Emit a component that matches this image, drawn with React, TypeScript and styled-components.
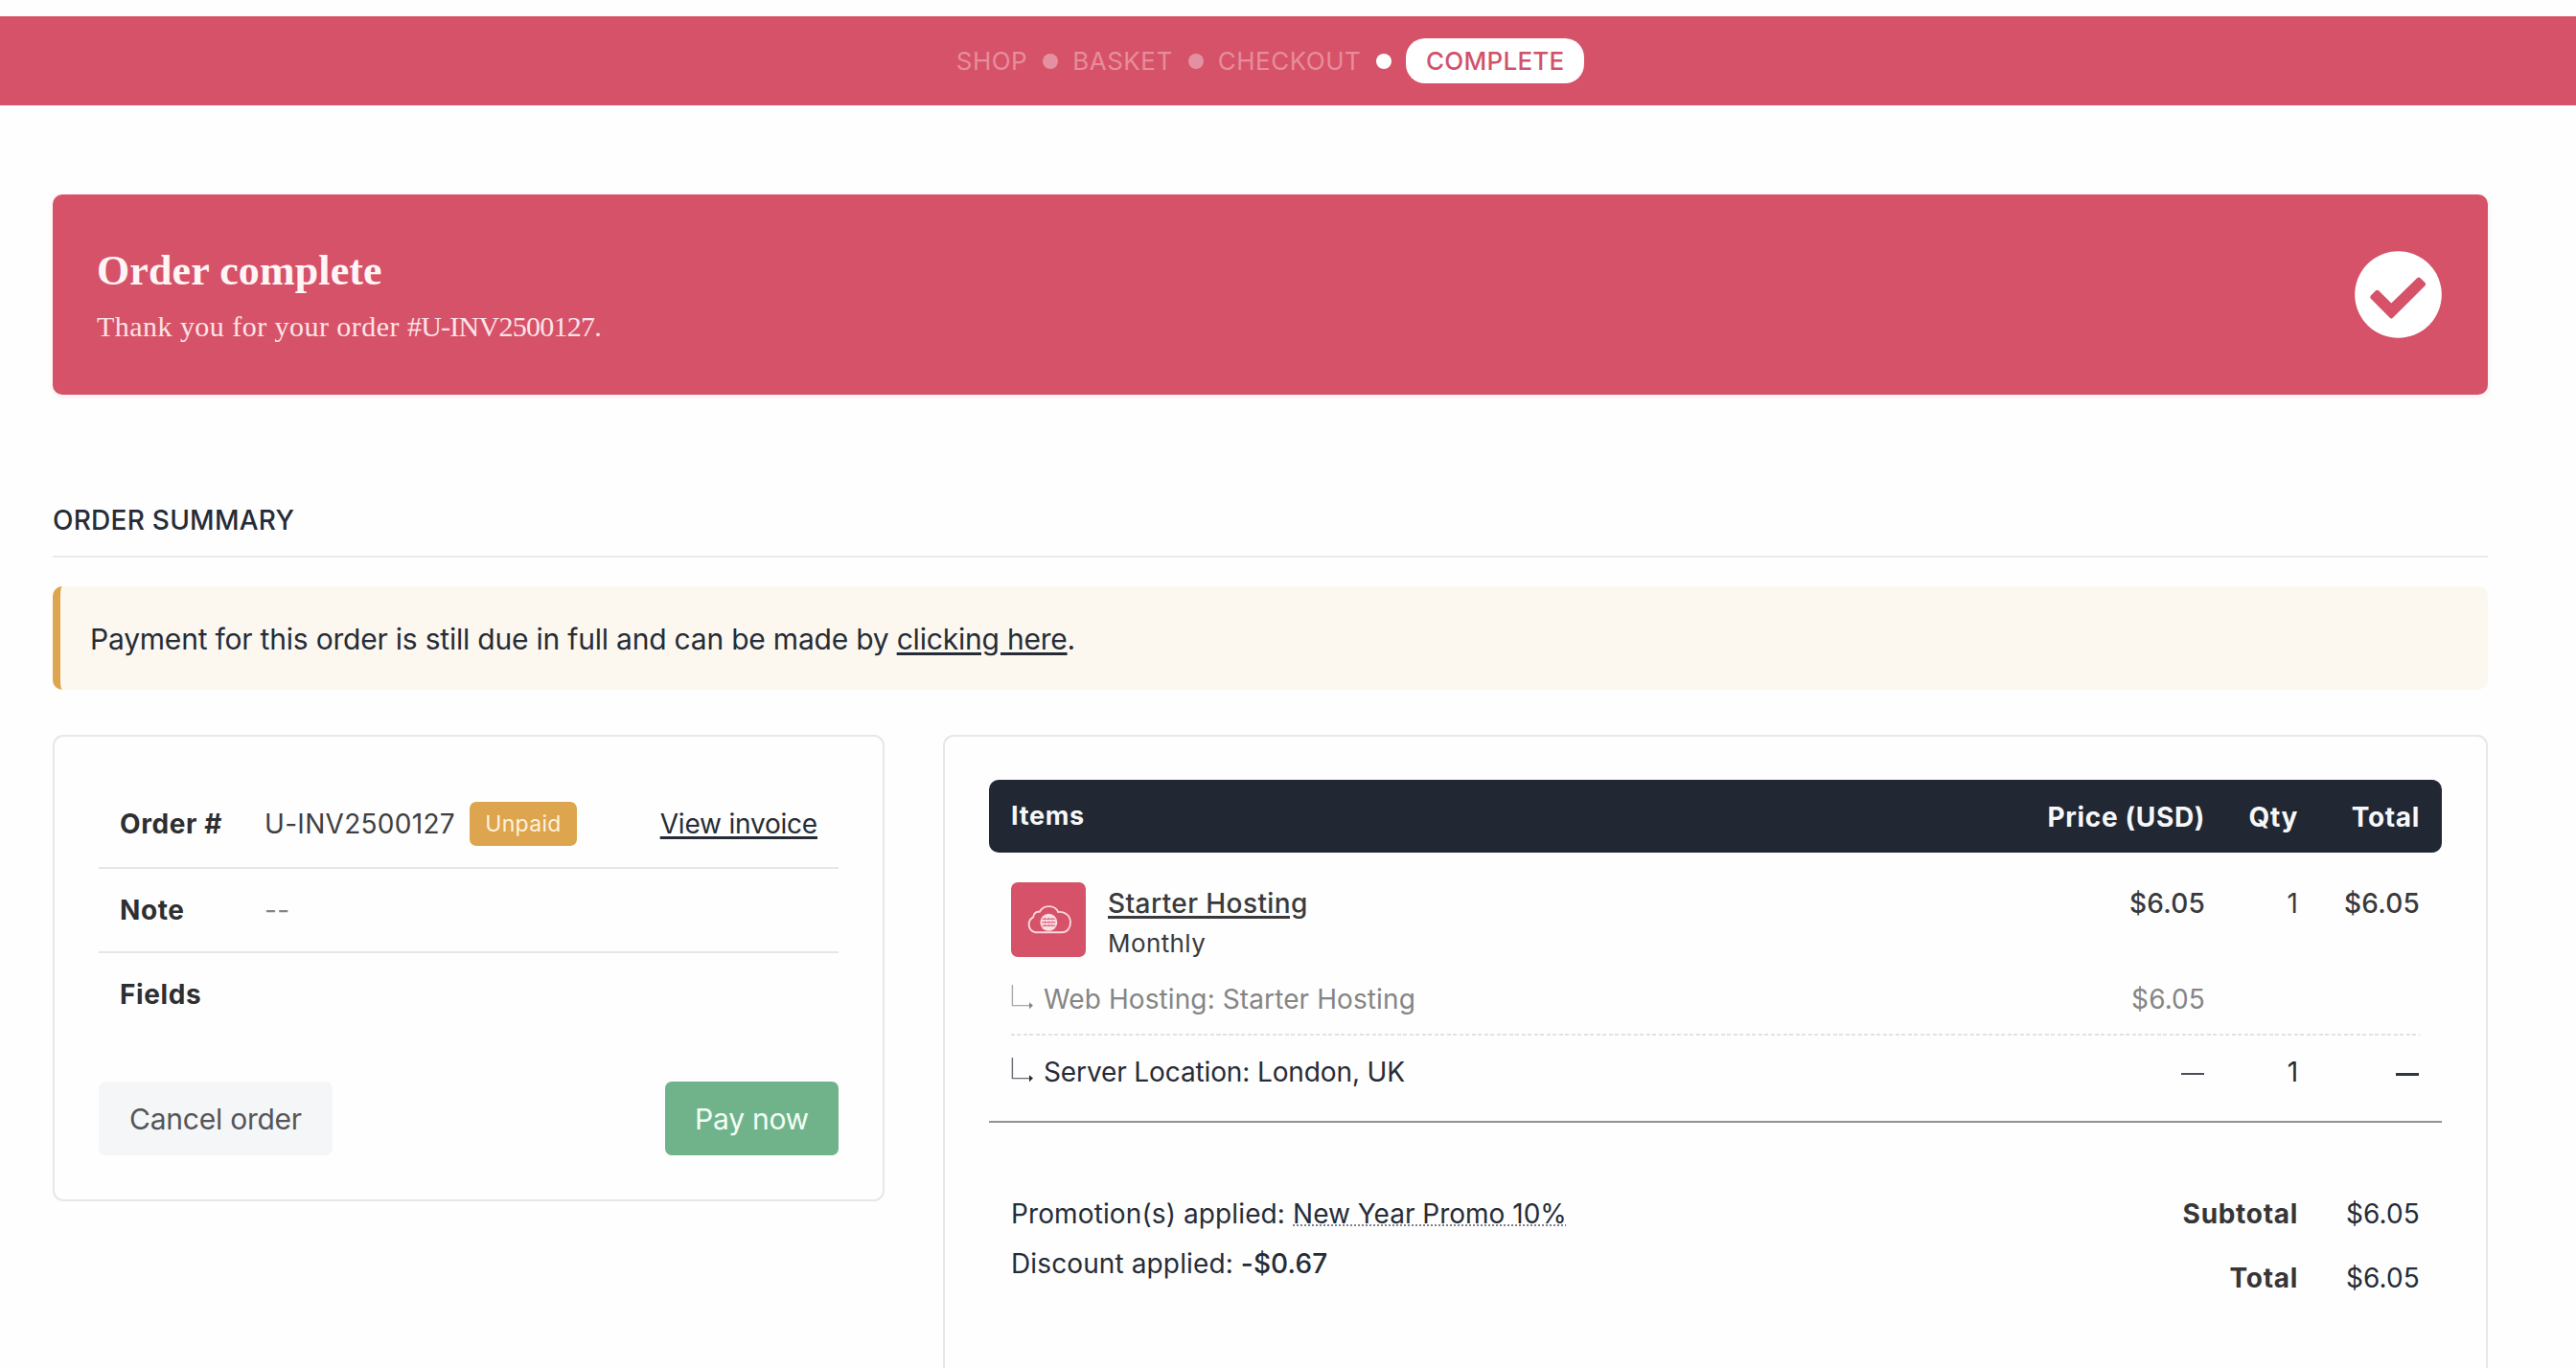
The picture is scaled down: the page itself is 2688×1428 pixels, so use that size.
import styled, { createGlobalStyle, css } from "styled-components";

const steps = ["SHOP", "BASKET", "CHECKOUT"];

function CheckIcon() {
  return (
    <svg width="91" height="91" viewBox="0 0 91 91">
      <circle cx="45.5" cy="45.5" r="45.3" fill="#ffffff" />
      <path
        d="M16.9 46.4l5-4.8a2.5 2.5 0 0 1 3.4 0L38.3 54.6 65.2 28.2a2.5 2.5 0 0 1 3.4 0l4.9 4.8a2.5 2.5 0 0 1 0 3.3L40.1 69.5a2.5 2.5 0 0 1-3.6 0L16.9 49.8a2.5 2.5 0 0 1 0-3.4z"
        fill="#d65268"
      />
    </svg>
  );
}

function HostingIcon() {
  return (
    <svg width="78" height="78" viewBox="0 0 78 78" fill="none">
      <path
        d="M25 52.2A8.6 8.6 0 0 1 23.2 36.3C23.3 32.5 26.4 30.2 29.8 30.8C33.8 23.2 45.6 23.2 49.2 31C56.8 30 62 35.4 62 42C62 48 58.2 52.2 53 52.2Z"
        stroke="#fbd7dd"
        strokeWidth="1.9"
      />
      <circle cx="39.3" cy="41.8" r="9" fill="#fbdde2" />
      <g stroke="#d65268" strokeWidth="1">
        <path d="M32.5 38.3h13.6M32 41.8h14.6M32.5 45.3h13.6" strokeDasharray="3 0.8" />
        <path d="M39.3 37v9.6M35.6 37v9.6M43 37v9.6" strokeDasharray="2 1.5" />
      </g>
    </svg>
  );
}

function BranchArrow() {
  return (
    <svg width="24" height="27" viewBox="0 0 24 27">
      <path d="M1.4 0V21.6H20" fill="none" stroke="currentColor" strokeWidth="1.4" opacity="0.7" />
      <path d="M19 18.2L23 21.6L19 25.2Z" fill="currentColor" />
    </svg>
  );
}

export default function App() {
  return (
    <Page>
      <GlobalStyle />
      <StepBar>
        {steps.map((step, i) => (
          <StepGroup key={step}>
            <Step>{step}</Step>
            <Dot $active={i === steps.length - 1} />
          </StepGroup>
        ))}
        <CurrentStep>COMPLETE</CurrentStep>
      </StepBar>

      <Main>
        <Banner>
          <div>
            <BannerTitle>Order complete</BannerTitle>
            <BannerText>
              Thank you for your order <OrderNumber>#U-INV2500127.</OrderNumber>
            </BannerText>
          </div>
          <CheckIcon />
        </Banner>

        <SectionTitle>ORDER SUMMARY</SectionTitle>

        <Alert>
          <span>
            Payment for this order is still due in full and can be made by{" "}
            <TextLink href="#">clicking here</TextLink>.
          </span>
        </Alert>

        <Columns>
          {/* Left Side - Order details */}
          <OrderCard>
            <DetailRow $tall>
              <DetailLabel>Order #</DetailLabel>
              <DetailValue>U-INV2500127</DetailValue>
              <Badge>Unpaid</Badge>
              <InvoiceLink href="#">View invoice</InvoiceLink>
            </DetailRow>
            <DetailRow>
              <DetailLabel>Note</DetailLabel>
              <DetailValue $muted>--</DetailValue>
            </DetailRow>
            <DetailRow>
              <DetailLabel>Fields</DetailLabel>
            </DetailRow>
            <Actions>
              <CancelButton type="button">Cancel order</CancelButton>
              <PayButton type="button">Pay now</PayButton>
            </Actions>
          </OrderCard>

          {/* Right Side - Items */}
          <ItemsCard>
            <TableHead>
              <ItemsHeading>Items</ItemsHeading>
              <span>Price (USD)</span>
              <span>Qty</span>
              <span>Total</span>
            </TableHead>

            <ItemRow>
              <Product>
                <ProductIcon>
                  <HostingIcon />
                </ProductIcon>
                <div>
                  <ProductName href="#">Starter Hosting</ProductName>
                  <ProductTerm>Monthly</ProductTerm>
                </div>
              </Product>
              <Amount>$6.05</Amount>
              <span>1</span>
              <Amount>$6.05</Amount>
            </ItemRow>

            <OptionRow $muted>
              <Option>
                <BranchArrow />
                Web Hosting: Starter Hosting
              </Option>
              <span>$6.05</span>
            </OptionRow>
            <Divider />
            <OptionRow>
              <Option>
                <BranchArrow />
                Server Location: London, UK
              </Option>
              <Dash />
              <span>1</span>
              <Dash $strong />
            </OptionRow>

            <Summary>
              <Promotions>
                <p>
                  Promotion(s) applied: <Promo>New Year Promo 10%</Promo>
                </p>
                <p>
                  Discount applied: <Discount>-$0.67</Discount>
                </p>
              </Promotions>
              <Totals>
                <TotalLabel>Subtotal</TotalLabel>
                <span>$6.05</span>
                <TotalLabel>Total</TotalLabel>
                <span>$6.05</span>
              </Totals>
            </Summary>
          </ItemsCard>
        </Columns>
      </Main>
    </Page>
  );
}

const GlobalStyle = createGlobalStyle`
  * {
    box-sizing: border-box;
    margin: 0;
  }
  body {
    margin: 0;
    background-color: #fefefe;
    color: #262c37;
    font-family: Inter, "Liberation Sans", sans-serif;
    font-size: 28px;
    letter-spacing: 0.12px;
  }
`;

const Page = styled.div`
  width: 2688px;
  height: 1428px;
  overflow: hidden;
  padding-top: 17px;
`;

const StepBar = styled.nav`
  display: flex;
  align-items: center;
  justify-content: center;
  gap: 15px;
  height: 93px;
  padding-right: 37px;
  background-color: #d65268;
  font-size: 26px;
`;

const StepGroup = styled.div`
  display: flex;
  align-items: center;
  gap: 16px;
`;

const Step = styled.span`
  color: #e68d9c;
  letter-spacing: 0.5px;
  line-height: 49px;
`;

const Dot = styled.span<{ $active?: boolean }>`
  width: 16px;
  height: 16px;
  border-radius: 50%;
  background-color: ${(p) => (p.$active ? "#ffffff" : "#e391a1")};
`;

const CurrentStep = styled.span`
  width: 186px;
  height: 47px;
  border-radius: 20px;
  background-color: #ffffff;
  color: #d0536a;
  font-weight: 500;
  letter-spacing: 0.25px;
  line-height: 48px;
  text-align: center;
`;

const Main = styled.main`
  width: 2541px;
  margin-left: 55px;
`;

const Banner = styled.section`
  display: flex;
  justify-content: space-between;
  height: 209px;
  margin-top: 93px;
  padding: 55px 48px 0 46px;
  border-radius: 10px;
  background-color: #d65268;
  box-shadow: 0 2px 6px rgba(214, 82, 104, 0.12);
  color: #fff4f6;
  font-family: "Liberation Serif", serif;

  svg {
    margin-top: 4px;
  }
`;

const BannerTitle = styled.h1`
  font-size: 44px;
  font-weight: 700;
  line-height: 50px;
`;

const BannerText = styled.p`
  margin-top: 13px;
  color: #fce3e7;
  font-size: 30px;
  letter-spacing: 0.46px;
  line-height: 40px;
`;

const OrderNumber = styled.span`
  letter-spacing: -0.75px;
`;

const SectionTitle = styled.h2`
  height: 60px;
  margin-top: 110px;
  border-bottom: 2px solid #e9eaeb;
  font-size: 28px;
  font-weight: 500;
  letter-spacing: 0.25px;
  line-height: 43px;
`;

const Alert = styled.div`
  display: flex;
  align-items: center;
  height: 108px;
  margin-top: 30px;
  padding: 1px 0 0 31px;
  border-left: 8px solid #dda54d;
  border-radius: 10px;
  background-color: #fcf8f0;
  font-size: 30px;
  letter-spacing: -0.21px;
`;

const linkStyle = css`
  color: inherit;
  text-decoration: underline;
  text-decoration-thickness: 2.5px;
  text-underline-offset: 3px;
`;

const TextLink = styled.a`
  ${linkStyle}
`;

const Columns = styled.div`
  display: grid;
  grid-template-columns: 868px 1fr;
  align-items: start;
  gap: 61px;
  margin-top: 47px;
`;

const Card = styled.section`
  border: 2px solid #e7e7e8;
  border-radius: 11px;
  background-color: #fefefe;
`;

const OrderCard = styled(Card)`
  height: 487px;
  padding: 45px 46px;
`;

const DetailRow = styled.div<{ $tall?: boolean }>`
  display: flex;
  align-items: center;
  height: ${(p) => (p.$tall ? "93px" : "88px")};
  padding: 0 22px;
  border-bottom: 2px solid #e6e6e6;

  &:nth-child(3) {
    border-bottom-color: transparent;
  }
`;

const DetailLabel = styled.strong`
  width: 151px;
  color: #2f2f31;
  font-weight: 700;
  letter-spacing: 0.6px;
`;

const DetailValue = styled.span<{ $muted?: boolean }>`
  color: ${(p) => (p.$muted ? "#858585" : "#3f3f41")};
  letter-spacing: 0.3px;
`;

const Badge = styled.span`
  width: 112px;
  height: 46px;
  margin-left: 15px;
  border-radius: 7px;
  background-color: #dda54d;
  color: #fff3dc;
  font-size: 23px;
  letter-spacing: 0.3px;
  line-height: 46px;
  text-align: center;
`;

const InvoiceLink = styled.a`
  ${linkStyle}
  margin-left: auto;
  letter-spacing: -0.2px;
`;

const Actions = styled.div`
  display: flex;
  justify-content: space-between;
  margin-top: 46px;
`;

const Button = styled.button`
  height: 77px;
  border: none;
  border-radius: 7px;
  font-family: inherit;
  font-size: 30px;
  letter-spacing: -0.25px;
  cursor: pointer;
`;

const CancelButton = styled(Button)`
  width: 244px;
  background-color: #f5f6f8;
  color: #545558;
`;

const PayButton = styled(Button)`
  width: 181px;
  background-color: #70b38b;
  color: #f3fff7;
`;

const ItemsCard = styled(Card)`
  height: 760px;
  padding: 45px 46px 0;
`;

const rowGrid = css`
  display: grid;
  grid-template-columns: 1fr 300px 97px 127px;
  padding: 0 23px;

  > span {
    text-align: right;
  }
`;

const TableHead = styled.div`
  ${rowGrid}
  height: 76px;
  border-radius: 10px;
  background-color: #212833;
  color: #f6f7f9;
  font-weight: 700;
  letter-spacing: 0.65px;
  line-height: 78px;
`;

const ItemsHeading = styled.div`
  font-size: 27px;
  line-height: 76px;
`;

const ItemRow = styled.div`
  ${rowGrid}
  padding-top: 31px;
  color: #3a3a3c;
  line-height: 44px;
`;

const Product = styled.div`
  display: flex;
  gap: 23px;
`;

const ProductIcon = styled.div`
  width: 78px;
  height: 78px;
  border-radius: 7px;
  background-color: #d65268;
`;

const ProductName = styled.a`
  ${linkStyle}
  display: block;
  font-weight: 500;
  letter-spacing: 0.42px;
`;

const ProductTerm = styled.div`
  font-size: 26px;
  letter-spacing: 0.4px;
  line-height: 40px;
`;

const Amount = styled.span`
  font-weight: 500;
  letter-spacing: 0.2px;
`;

const OptionRow = styled.div<{ $muted?: boolean }>`
  ${rowGrid}
  height: ${(p) => (p.$muted ? "74px" : "91px")};
  padding-top: 18px;
  border-bottom: ${(p) => (p.$muted ? "none" : "2px solid #919296")};
  color: ${(p) => (p.$muted ? "#858585" : "#262c37")};
  letter-spacing: ${(p) => (p.$muted ? "0.1px" : "-0.12px")};
  line-height: 40px;
`;

const Option = styled.div`
  display: flex;
  gap: 10px;

  svg {
    margin-top: 5px;
  }
`;

const Divider = styled.div`
  height: 2px;
  margin: 0 23px;
  background: repeating-linear-gradient(90deg, #e1e2e3 0 4px, transparent 4px 6.5px);
`;

const Dash = styled.span<{ $strong?: boolean }>`
  justify-self: end;
  width: 24px;
  height: ${(p) => (p.$strong ? "3px" : "2px")};
  margin: 21px 1px 0 0;
  background-color: ${(p) => (p.$strong ? "#2f3541" : "#4a4f5a")};
`;

const Summary = styled.div`
  display: flex;
  justify-content: space-between;
  padding: 62px 23px 0;
`;

const Promotions = styled.div`
  margin-top: 8px;
  line-height: 51.5px;
`;

const Promo = styled.span`
  letter-spacing: 0;
  text-decoration: underline dotted #7d828a 2px;
  text-decoration-skip-ink: none;
  text-underline-offset: 1px;
`;

const Discount = styled.span`
  font-weight: 500;
`;

const Totals = styled.div`
  display: grid;
  grid-template-columns: 200px 127px;
  line-height: 67px;
  text-align: right;
`;

const TotalLabel = styled.strong`
  color: #363638;
  font-weight: 700;
  letter-spacing: 0.7px;
`;
